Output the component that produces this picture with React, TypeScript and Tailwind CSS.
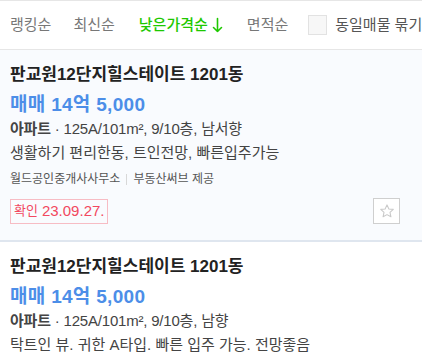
import React from 'react';

type Listing = {
  title: string;
  price: string;
  info: string;
  desc: string;
  realtor: string;
  source: string;
  checked: string;
  highlight?: boolean;
};

const listings: Listing[] = [
  {
    title: '판교원12단지힐스테이트 1201동',
    price: '매매 14억 5,000',
    info: '125A/101m², 9/10층, 남서향',
    desc: '생활하기 편리한동, 트인전망, 빠른입주가능',
    realtor: '월드공인중개사사무소',
    source: '부동산써브 제공',
    checked: '23.09.27.',
    highlight: true,
  },
  {
    title: '판교원12단지힐스테이트 1201동',
    price: '매매 14억 5,000',
    info: '125A/101m², 9/10층, 남향',
    desc: '탁트인 뷰. 귀한 A타입. 빠른 입주 가능. 전망좋음',
    realtor: '월드공인중개사사무소',
    source: '부동산써브 제공',
    checked: '23.09.27.',
  },
];

const Sep = ({ wide }: { wide?: boolean }) => (
  <span className={`${wide ? 'mx-[12px]' : 'mx-[11px]'} h-[11px] w-px bg-[#e2e2e2]`} />
);

const Star = () => (
  <svg width="16" height="16" viewBox="0 0 24 24" fill="none" stroke="#c9c9c9" strokeWidth="1.6" strokeLinejoin="round">
    <path d="M12 2.8l2.8 6.1 6.6.7-4.9 4.5 1.4 6.6L12 17.4l-5.9 3.3 1.4-6.6-4.9-4.5 6.6-.7z" />
  </svg>
);

const DownArrow = () => (
  <svg width="11" height="16" viewBox="0 0 11 16" fill="none" stroke="#1ec800" strokeWidth="1.6" strokeLinecap="round" strokeLinejoin="round">
    <path d="M5.5 1.5v13M1.5 10.5l4 4 4-4" />
  </svg>
);

const Card: React.FC<{ item: Listing }> = ({ item }) => (
  <div className={`border-b-2 border-[#dfe6ef] px-[10px] pt-[13px] pb-[16px] ${item.highlight ? 'bg-[#f9fbfe]' : 'bg-white'}`}>
    <div className="text-[17px] leading-[24px] font-bold text-[#222]">{item.title}</div>
    <div className="mt-[6px] text-[19px] leading-[24px] font-bold tracking-[0.3px] text-[#4c8ee8]">{item.price}</div>
    <div className="text-[15px] leading-[24px] text-[#444] tracking-[-0.2px]">
      <span className="font-bold">아파트</span> · {item.info}
    </div>
    <div className="text-[15px] leading-[24px] text-[#444]">{item.desc}</div>
    <div className="mt-[5px] flex items-center text-[12px] leading-[18px] text-[#555]">
      <span>{item.realtor}</span>
      <span className="mx-[6px] h-[11px] w-px bg-[#d8d8d8]" />
      <span>{item.source}</span>
    </div>
    <div className="mt-[10px] flex items-center justify-between">
      <div className="flex h-[25px] items-center gap-[4px] border border-[#f7bcc4] px-[3px] text-[#f2485f]">
        <span className="text-[13px]">확인</span>
        <span className="text-[15px]">{item.checked}</span>
      </div>
      <button className="mr-[12px] flex h-[26px] w-[27px] items-center justify-center border border-[#cfcfcf] bg-white">
        <Star />
      </button>
    </div>
  </div>
);

export default function App() {
  return (
    <div className="w-[422px] overflow-hidden bg-white font-['Liberation_Sans','Noto_Sans_CJK_KR',sans-serif]">
      <div className="flex h-[50px] items-center whitespace-nowrap border-y border-[#e6e6e6] px-[10px] text-[15px] text-[#777]">
        <span>랭킹순</span>
        <Sep />
        <span>최신순</span>
        <Sep wide />
        <span className="flex items-center gap-[4px] font-medium text-[#1ec800]">
          낮은가격순 <DownArrow />
        </span>
        <Sep wide />
        <span>면적순</span>
        <span className="ml-[20px] mr-[8px] h-[20px] w-[19px] shrink-0 border border-[#e2e2e2] bg-[#f7f7f7]" />
        <span className="text-[#555]">동일매물 묶기</span>
      </div>
      {listings.map((l, i) => (
        <Card key={i} item={l} />
      ))}
    </div>
  );
}
